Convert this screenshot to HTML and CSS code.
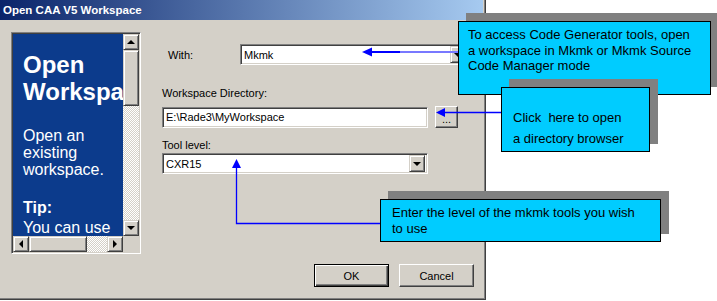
FILE: index.html
```html
<!DOCTYPE html>
<html lang="en">
<head>
  <meta charset="UTF-8" />
  <title>Open CAA V5 Workspace</title>
  <link rel="stylesheet" href="styles.css">
</head>
<body>
  <div class="screen">
    <div class="dialog">
      <div class="titlebar">Open CAA V5 Workspace</div>

      <div class="content">
        <div class="panel">
          <div class="panel-view">
            <h1>Open<br>Workspace</h1>
            <p class="intro">Open an<br>existing<br>workspace.</p>
            <h2>Tip:</h2>
            <p class="tip">You can use</p>
          </div>
          <div class="vscroll">
            <span class="sbtn"><i class="tri up"></i></span>
            <span class="thumb v"></span>
            <span class="track"></span>
            <span class="sbtn"><i class="tri down"></i></span>
          </div>
          <div class="hscroll">
            <span class="sbtn"><i class="tri left"></i></span>
            <span class="thumb h"></span>
            <span class="track"></span>
            <span class="sbtn"><i class="tri right"></i></span>
          </div>
          <div class="corner"></div>
        </div>

        <div class="form">
          <div class="with-row">
            <label>With:</label>
            <div class="field combo wide">
              <span class="value">Mkmk</span>
              <span class="dropbtn"><i class="tri down"></i></span>
            </div>
          </div>

          <label class="caption dir-caption">Workspace Directory:</label>
          <div class="dir-row">
            <div class="field text"><span class="value">E:\Rade3\MyWorkspace</span></div>
            <button class="browse">...</button>
          </div>

          <label class="caption level-caption">Tool level:</label>
          <div class="field combo level">
            <span class="value">CXR15</span>
            <span class="dropbtn"><i class="tri down"></i></span>
          </div>
        </div>
      </div>

      <div class="actions">
        <button class="btn default">OK</button>
        <button class="btn">Cancel</button>
      </div>
    </div>

    <!-- annotations -->
    <svg class="arrows" width="717" height="301" viewBox="0 0 717 301">
      <line x1="370" y1="52" x2="400" y2="52" stroke="#0000ff" stroke-width="2" />
      <line x1="400" y1="52" x2="458" y2="52" stroke="#7878ff" stroke-width="2" />
      <polygon points="362,52 372,47.5 372,56.5" fill="#0000ff" />

      <line x1="443" y1="112.5" x2="501" y2="112.5" stroke="#0000ff" stroke-width="1.3" />
      <polygon points="436,112.5 445,108 445,117" fill="#0000ff" />

      <polyline points="380,223.5 236.5,223.5 236.5,166" fill="none" stroke="#0000ff" stroke-width="1.3" />
      <polygon points="236.5,159 232,168 241,168" fill="#0000ff" />
    </svg>

    <div class="callout access">To access Code Generator tools, open<br>a workspace in Mkmk or Mkmk Source<br>Code Manager mode</div>
    <div class="callout browse-note">Click&nbsp; here to open<br>a directory browser</div>
    <div class="callout level-note">Enter the level of the mkmk tools you wish<br>to use</div>
  </div>
</body>
</html>
```

FILE: styles.css
```css
body, html {
  margin: 0;
  padding: 0;
  background: #fff;
  font-family: 'Liberation Sans', Arial, sans-serif;
}
.screen {
  position: relative;
  width: 717px;
  height: 301px;
  overflow: hidden;
}
.dialog {
  width: 486px;
  height: 300px;
  box-sizing: border-box;
  background: #d4d0c8;
  border-right: 1px solid #404040;
  border-bottom: 1px solid #404040;
  box-shadow: inset -1px -1px #808080;
  font-size: 11px;
  color: #000;
}
.titlebar {
  height: 20px;
  margin-right: 2px;
  padding-left: 3px;
  line-height: 20px;
  background: linear-gradient(to right, #0a246a, #a6caf0);
  color: #fff;
  font-weight: bold;
  font-size: 11.5px;
}

/* body of the dialog */
.content {
  display: flex;
  padding: 12px 0 0 11px;
  height: 222px;
}
.panel {
  width: 130px;
  height: 222px;
  box-sizing: border-box;
  border: 1px solid;
  border-color: #808080 #fff #fff #808080;
  box-shadow: inset 1px 1px #404040, inset -1px -1px #d4d0c8;
  padding: 1px;
  display: grid;
  grid-template-columns: 110px 16px;
  grid-template-rows: 202px 16px;
}
.panel-view {
  background: #0c3b8c;
  color: #fff;
  overflow: hidden;
  white-space: nowrap;
  padding: 17px 0 0 10px;
}
.panel-view h1 {
  margin: 0;
  font-size: 24px;
  line-height: 27px;
}
.panel-view .intro {
  margin: 22px 0 0;
  font-size: 16px;
  line-height: 17px;
}
.panel-view h2 {
  margin: 20px 0 0;
  font-size: 16px;
  line-height: 20px;
}
.panel-view .tip {
  margin: 0;
  font-size: 16px;
  line-height: 20px;
}
.vscroll, .hscroll {
  display: flex;
}
.vscroll { flex-direction: column; }
.sbtn, .thumb {
  box-sizing: border-box;
  border: 1px solid;
  border-color: #d4d0c8 #404040 #404040 #d4d0c8;
  box-shadow: inset 1px 1px #fff, inset -1px -1px #808080;
  background: #d4d0c8;
}
.sbtn {
  width: 16px;
  height: 16px;
  flex: none;
  display: flex;
  align-items: center;
  justify-content: center;
}
.thumb.v { height: 56px; }
.thumb.h { width: 58px; }
.track {
  flex: 1;
  background-image: conic-gradient(#fff 25%, #d4d0c8 0 50%, #fff 0 75%, #d4d0c8 0);
  background-size: 2px 2px;
}
.corner { background: #d4d0c8; }

.tri {
  width: 0;
  height: 0;
  border: 0 solid transparent;
}
.tri.up { border-width: 0 4px 4px; border-bottom-color: #000; }
.tri.down { border-width: 4px 4px 0; border-top-color: #000; }
.tri.left { border-width: 4px 4px 4px 0; border-right-color: #000; }
.tri.right { border-width: 4px 0 4px 4px; border-left-color: #000; }

/* form */
.form {
  margin-left: 21px;
  padding-top: 12px;
}
.with-row {
  display: flex;
  align-items: center;
}
.with-row label {
  width: 72px;
  padding-left: 6px;
}
.field {
  height: 21px;
  box-sizing: border-box;
  border: 1px solid;
  border-color: #808080 #fff #fff #808080;
  box-shadow: inset 1px 1px #404040, inset -1px -1px #d4d0c8;
  background: #fff;
  display: flex;
  align-items: center;
  padding: 2px 2px 2px 3px;
}
.field .value { flex: 1; }
.combo.wide { width: 229px; }
.combo.level { width: 266px; height: 21px; margin-top: 1px; }
.text { width: 266px; }
.dropbtn {
  width: 16px;
  height: 17px;
  box-sizing: border-box;
  border: 1px solid;
  border-color: #d4d0c8 #404040 #404040 #d4d0c8;
  box-shadow: inset 1px 1px #fff, inset -1px -1px #808080;
  background: #d4d0c8;
  display: flex;
  align-items: center;
  justify-content: center;
}
.caption {
  display: block;
  line-height: 13px;
}
.dir-caption { margin-top: 22px; }
.level-caption { margin-top: 11px; }
.dir-row {
  display: flex;
  align-items: center;
  gap: 7px;
  margin-top: 6px;
}
.browse, .btn {
  font-family: inherit;
  font-size: 11px;
  color: #000;
  background: #d4d0c8;
  border: 1px solid;
  border-color: #fff #404040 #404040 #fff;
  box-shadow: inset -1px -1px #808080;
  padding: 0;
}
.browse {
  width: 23px;
  height: 22px;
  line-height: 14px;
  padding-top: 4px;
}

.actions {
  display: flex;
  justify-content: flex-end;
  gap: 10px;
  margin-top: 10px;
  padding-right: 11px;
}
.btn {
  width: 75px;
  height: 23px;
}
.btn.default {
  border-color: #000;
  box-shadow: inset 1px 1px #fff, inset -1px -1px #404040, inset -2px -2px #808080;
}

/* annotation callouts */
.arrows {
  position: absolute;
  left: 0;
  top: 0;
}
.callout {
  position: absolute;
  box-sizing: border-box;
  background: #00ccff;
  border: 1px solid #000;
  box-shadow: 8px -8px 0 #808080;
  color: #000;
  font-size: 13px;
  white-space: nowrap;
}
.callout.access {
  left: 458px;
  top: 21px;
  width: 253px;
  height: 74px;
  padding: 5px 0 0 9px;
  line-height: 15.5px;
}
.callout.browse-note {
  left: 501px;
  top: 87px;
  width: 149px;
  height: 65px;
  padding: 19px 0 0 11px;
  line-height: 21px;
}
.callout.level-note {
  left: 380px;
  top: 199px;
  width: 281px;
  height: 43px;
  padding: 5px 0 0 11px;
  line-height: 16px;
}
```
